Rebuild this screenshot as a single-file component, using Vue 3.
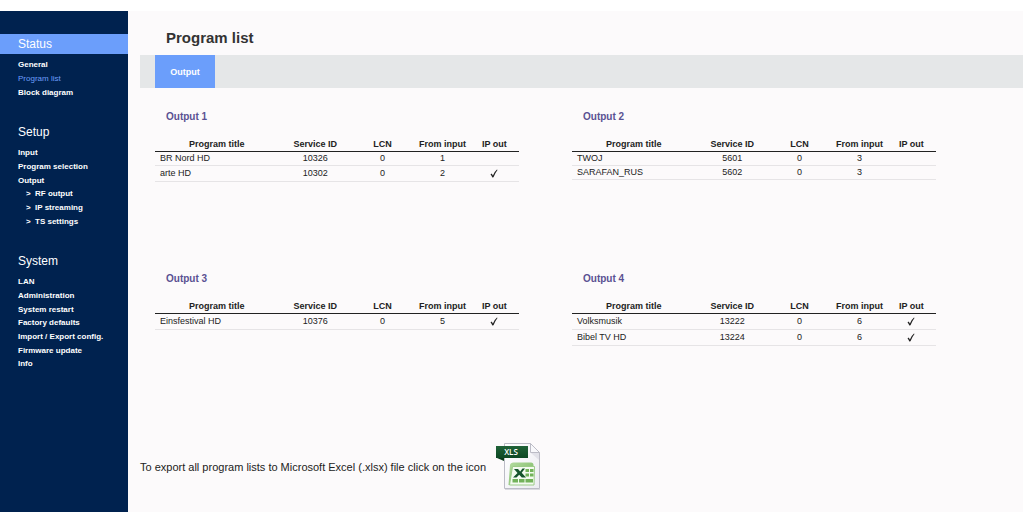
<script setup>
const menu = [
  {
    title: 'Status',
    active: true,
    items: [{ label: 'General' }, { label: 'Program list', current: true }, { label: 'Block diagram' }],
  },
  {
    title: 'Setup',
    items: [
      { label: 'Input' },
      { label: 'Program selection' },
      { label: 'Output' },
      { label: 'RF output', sub: true },
      { label: 'IP streaming', sub: true },
      { label: 'TS settings', sub: true },
    ],
  },
  {
    title: 'System',
    items: [
      { label: 'LAN' },
      { label: 'Administration' },
      { label: 'System restart' },
      { label: 'Factory defaults' },
      { label: 'Import / Export config.' },
      { label: 'Firmware update' },
      { label: 'Info' },
    ],
  },
]

const outputs = [
  {
    name: 'Output 1',
    programs: [
      { title: 'BR Nord HD', sid: 10326, lcn: 0, input: 1, ip: false },
      { title: 'arte HD', sid: 10302, lcn: 0, input: 2, ip: true },
    ],
  },
  {
    name: 'Output 2',
    programs: [
      { title: 'TWOJ', sid: 5601, lcn: 0, input: 3, ip: false },
      { title: 'SARAFAN_RUS', sid: 5602, lcn: 0, input: 3, ip: false },
    ],
  },
  {
    name: 'Output 3',
    programs: [{ title: 'Einsfestival HD', sid: 10376, lcn: 0, input: 5, ip: true }],
  },
  {
    name: 'Output 4',
    programs: [
      { title: 'Volksmusik', sid: 13222, lcn: 0, input: 6, ip: true },
      { title: 'Bibel TV HD', sid: 13224, lcn: 0, input: 6, ip: true },
    ],
  },
]
</script>

<template>
  <div class="page">
    <nav class="sidebar">
      <section v-for="group in menu" :key="group.title" class="group">
        <h2 :class="{ active: group.active }">{{ group.title }}</h2>
        <ul>
          <li v-for="item in group.items" :key="item.label" :class="{ sub: item.sub }">
            <span v-if="item.sub" class="marker">&gt;</span>
            <a href="#" :class="{ current: item.current }">{{ item.label }}</a>
          </li>
        </ul>
      </section>
    </nav>

    <main class="content">
      <h1>Program list</h1>
      <div class="tabs">
        <button type="button" class="tab">Output</button>
      </div>

      <div class="outputs">
        <section v-for="out in outputs" :key="out.name" class="output">
          <h3>{{ out.name }}</h3>
          <table :aria-label="out.name">
            <colgroup>
              <col class="c-title" />
              <col class="c-sid" />
              <col class="c-lcn" />
              <col class="c-input" />
              <col class="c-ip" />
            </colgroup>
            <thead>
              <tr>
                <th scope="col">Program title</th>
                <th scope="col">Service ID</th>
                <th scope="col">LCN</th>
                <th scope="col">From input</th>
                <th scope="col">IP out</th>
              </tr>
            </thead>
            <tbody>
              <tr v-for="p in out.programs" :key="p.title" :class="{ ticked: p.ip }">
                <td>{{ p.title }}</td>
                <td>{{ p.sid }}</td>
                <td>{{ p.lcn }}</td>
                <td>{{ p.input }}</td>
                <td>
                  <svg v-if="p.ip" class="tick" viewBox="0 0 8 9" role="img" aria-label="yes">
                    <path d="M0.5 5.4 L1.7 4.6 L2.9 6.4 Q4.6 2.6 7 0.6 L7.5 1 Q5 4.2 3.5 8.2 L2.3 8.4 Q1.6 6.6 0.5 5.4 Z" />
                  </svg>
                </td>
              </tr>
            </tbody>
          </table>
        </section>
      </div>

      <div class="export">
        <span id="export-label">To export all program lists to Microsoft Excel (.xlsx) file click on the icon</span>
        <button type="button" class="xls" aria-labelledby="export-label">
          <svg viewBox="0 0 46 48">
            <defs>
              <linearGradient id="paper" x1="0" y1="0" x2="1" y2="1">
                <stop offset="0" stop-color="#ffffff" />
                <stop offset="1" stop-color="#ececf2" />
              </linearGradient>
              <linearGradient id="banner" x1="0" y1="0" x2="0" y2="1">
                <stop offset="0" stop-color="#1f6237" />
                <stop offset="1" stop-color="#0d4824" />
              </linearGradient>
              <linearGradient id="book" x1="0" y1="0" x2="1" y2="1">
                <stop offset="0" stop-color="#b4dca0" />
                <stop offset="1" stop-color="#74b35c" />
              </linearGradient>
            </defs>
            <path d="M8.5 0.5 H34.5 L43.5 9.5 V45.5 H8.5 Z" fill="url(#paper)" stroke="#bcbcc6" />
            <path d="M9 46.5 H44" stroke="#dadae0" />
            <path d="M34.5 0.5 V9.5 H43.5 Z" fill="#f8f8fb" stroke="#bcbcc6" />
            <path d="M35 10 H43 V17 Z" fill="#e2e2e9" />
            <path d="M1 15 H8 V18 Z" fill="#093a1b" />
            <rect x="0" y="3" width="32" height="12" fill="url(#banner)" />
            <text x="15" y="12" text-anchor="middle" class="xls-text">XLS</text>
            <path d="M14 22 Q14.5 19.5 17.5 19.5 H35 Q37.5 19.5 37.5 22 V24 H18 L15.5 42 H12.5 Z" fill="url(#book)" />
            <path d="M16.5 23.5 H38.5 L38 42 H13.5 Z" fill="#f4fbf0" stroke="#9ccb88" />
            <g fill="#72b25a">
              <rect x="29.5" y="26" width="3.5" height="3" />
              <rect x="34" y="26" width="3.5" height="3" />
              <rect x="29.5" y="30.5" width="3.5" height="3" />
              <rect x="34" y="30.5" width="3.5" height="3" />
              <rect x="29.5" y="36" width="7.5" height="3.5" />
              <rect x="23" y="36" width="5.5" height="3.5" />
              <rect x="16.5" y="36" width="5.5" height="3.5" />
            </g>
            <path d="M18 26 H22 L24.2 28.5 L26.5 25.5 H29 L25.7 29.8 L30 34.5 H25.8 L23.2 31.8 L20.5 34.5 H17 L21.5 30 Z" fill="#15542c" />
          </svg>
        </button>
      </div>
    </main>
  </div>
</template>

<style>
body {
  margin: 0;
  background: #ffffff;
}
</style>

<style scoped>
.page {
  display: flex;
  box-sizing: border-box;
  min-height: 100vh;
  padding-top: 11px;
  font-family: "Liberation Sans", Arial, sans-serif;
  color: #222222;
}

.sidebar {
  flex: 0 0 128px;
  box-sizing: border-box;
  padding-top: 23px;
  background: #00224f;
  color: #ffffff;
}

.group {
  margin-bottom: 23px;
}

.group h2 {
  margin: 0 0 4px;
  padding-left: 18px;
  font-size: 12px;
  font-weight: 400;
  line-height: 20px;
}

.group h2.active {
  background: #6b9efb;
}

.group ul {
  margin: 0;
  padding: 0 0 0 18px;
  list-style: none;
}

.group li {
  font-size: 8px;
  font-weight: 700;
  line-height: 14px;
  white-space: nowrap;
}

.group li:nth-child(3n) {
  line-height: 13px;
}

.group li.sub {
  padding-left: 8px;
}

.marker {
  display: inline-block;
  width: 9px;
}

.group a {
  color: #ffffff;
  text-decoration: none;
}

.group a.current {
  color: #6b9efb;
  font-weight: 400;
}

.content {
  flex: 1;
  min-width: 0;
  padding-left: 12px;
  background: #fcfafb;
}

h1 {
  margin: 0;
  padding: 17px 0 7px 26px;
  font-size: 15px;
  line-height: 20px;
  color: #333333;
}

.tabs {
  display: flex;
  padding-left: 15px;
  background: #e5e7e8;
}

.tab {
  width: 60px;
  height: 33px;
  padding: 0;
  border: 0;
  background: #6b9efb;
  color: #ffffff;
  font: 700 9px "Liberation Sans", Arial, sans-serif;
}

.outputs {
  display: grid;
  grid-template-columns: 1fr 1fr;
  grid-auto-rows: minmax(162px, auto);
  column-gap: 53px;
  padding: 22px 87px 0 15px;
}

h3 {
  margin: 0 0 13px;
  padding-left: 11px;
  font-size: 10px;
  line-height: 14px;
  color: #5a5192;
}

table {
  width: 100%;
  border-collapse: separate;
  border-spacing: 0;
  table-layout: fixed;
  font-size: 9px;
  line-height: 13px;
}

.c-title {
  width: 34%;
}

.c-sid {
  width: 20%;
}

.c-lcn {
  width: 17%;
}

.c-input {
  width: 16%;
}

.c-ip {
  width: 13%;
}

th {
  height: 14px;
  padding: 0;
  border-bottom: 1px solid #222222;
  text-align: center;
  white-space: nowrap;
}

td {
  height: 13px;
  padding: 0;
  border-bottom: 1px solid #e6e4e6;
  text-align: center;
}

.ticked td {
  height: 15px;
}

td:first-child {
  padding-left: 5px;
  text-align: left;
}

th:last-child,
td:last-child {
  padding-right: 2px;
}

.tick {
  display: block;
  width: 8px;
  height: 9px;
  margin: 0 auto;
  fill: #222222;
}

.export {
  display: flex;
  align-items: center;
  gap: 10px;
  padding-top: 9px;
  font-size: 11px;
}

.xls {
  width: 46px;
  height: 48px;
  padding: 0;
  border: 0;
  background: none;
  cursor: pointer;
}

.xls svg {
  display: block;
  width: 46px;
  height: 48px;
}

.xls-text {
  font-family: "Open Sans", sans-serif;
  font-size: 8px;
  font-weight: 600;
  fill: #ffffff;
}
</style>
